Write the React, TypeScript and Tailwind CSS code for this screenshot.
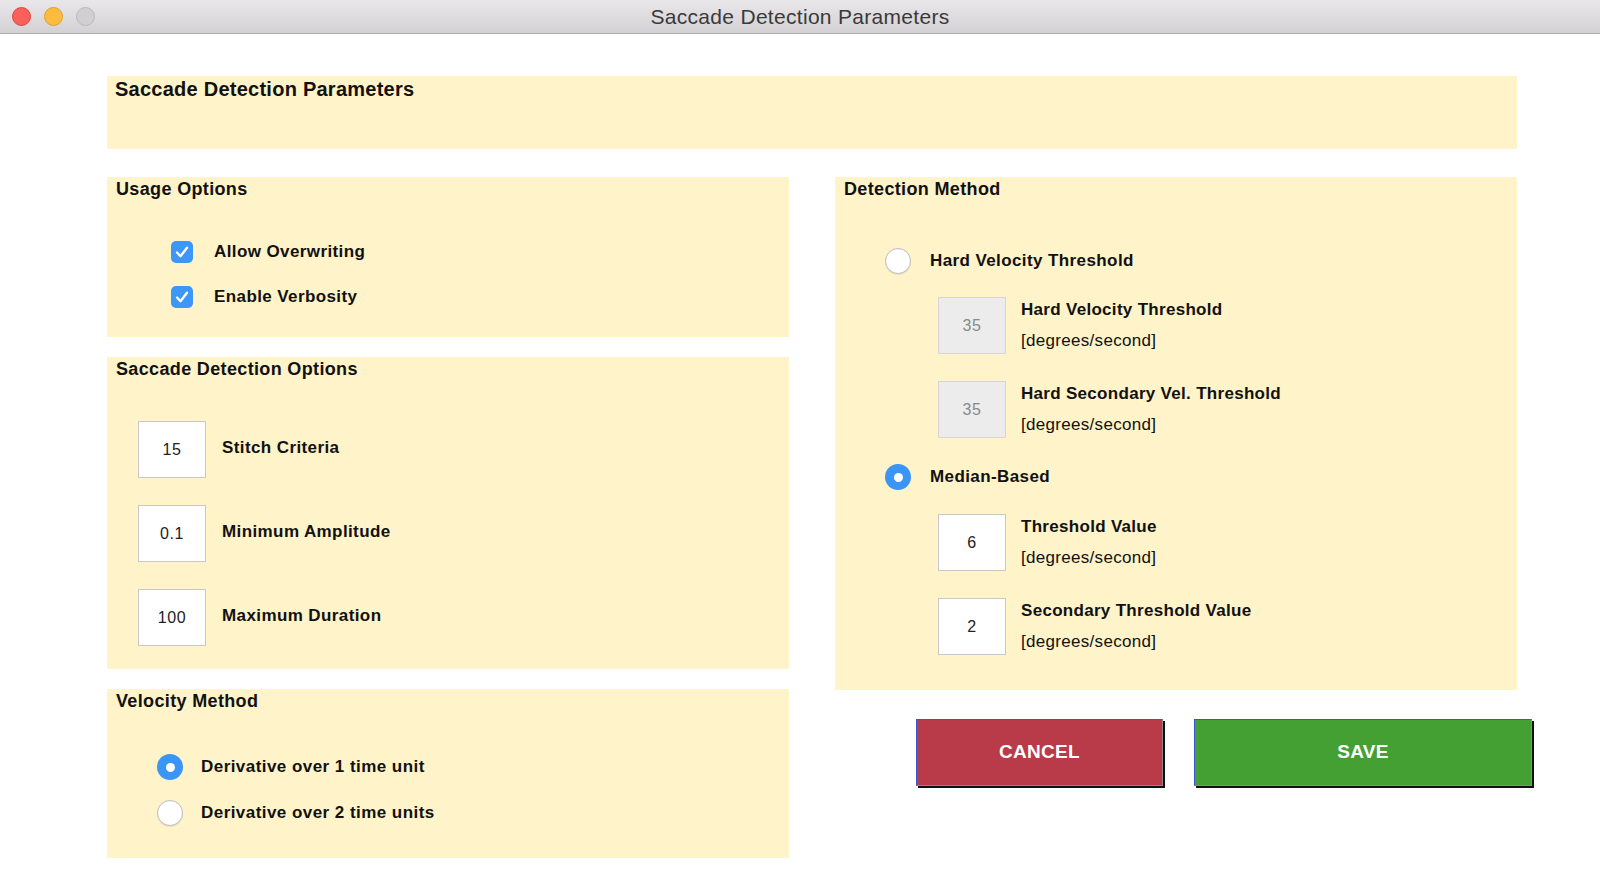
import React from "react";

const panel = "bg-[#fef3c9]";

function Checkbox() {
  return (
    <div className="w-[22px] h-[22px] rounded-[5px] bg-[#3c97f8] flex items-center justify-center">
      <svg width="22" height="22" viewBox="0 0 22 22">
        <path d="M6 11.5 L9.5 15.2 L16 6.8" fill="none" stroke="#fff" strokeWidth="2.4" strokeLinecap="round" strokeLinejoin="round" />
      </svg>
    </div>
  );
}

function Radio({ on }: { on?: boolean }) {
  if (on) {
    return (
      <div className="shrink-0 w-[26px] h-[26px] rounded-full bg-[#3a95f7] flex items-center justify-center">
        <div className="w-[9px] h-[9px] rounded-full bg-white" />
      </div>
    );
  }
  return <div className="shrink-0 w-[26px] h-[26px] rounded-full bg-white border border-[#bdbdbd] shadow-[0_1px_1px_rgba(0,0,0,0.08)]" />;
}

function NumBox({ value, disabled }: { value: string; disabled?: boolean }) {
  return (
    <div
      className={`shrink-0 w-[68px] h-[57px] border flex items-center justify-center text-[16px] tracking-[0.6px] ${
        disabled ? "bg-[#ececec] border-[#d6d6d6] text-[#8a8a8a]" : "bg-white border-[#c8c8c8] text-[#222]"
      }`}
    >
      {value}
    </div>
  );
}

function SectionTitle({ children }: { children: React.ReactNode }) {
  return <div className="pt-px pl-[9px] text-[18px] leading-[22px] tracking-[0.35px] font-bold text-[#111]">{children}</div>;
}

function DetectInput({ value, label, disabled }: { value: string; label: string; disabled?: boolean }) {
  return (
    <div className="flex items-center h-[57px] pl-[103px]">
      <NumBox value={value} disabled={disabled} />
      <div className="ml-[15px] text-[17px] leading-[31px] tracking-[0.3px] text-[#111] -mt-[2px]">
        <div className="font-bold">{label}</div>
        <div>[degrees/second]</div>
      </div>
    </div>
  );
}

const label = "text-[17px] font-bold tracking-[0.4px] text-[#111]";

export default function App() {
  return (
    <div className="w-[1600px] h-[891px] bg-white overflow-hidden font-['Liberation_Sans',Arial,sans-serif]">
      {/* Title bar */}
      <div className="relative h-[34px] bg-gradient-to-b from-[#e9e7e9] to-[#d3d1d3] border-b border-[#ababab] flex items-center justify-center">
        <div className="absolute left-[12px] top-[7px] flex gap-[13px]">
          <div className="w-[19px] h-[19px] rounded-full bg-[#fc605b] border border-[#e0443e]" />
          <div className="w-[19px] h-[19px] rounded-full bg-[#fdbc40] border border-[#dea123]" />
          <div className="w-[19px] h-[19px] rounded-full bg-[#d1d0d1] border border-[#bcbbbc]" />
        </div>
        <span className="text-[21px] tracking-[0.3px] text-[#3a3a3a]">Saccade Detection Parameters</span>
      </div>

      <div className="pl-[107px] pt-[42px]">
        {/* Header */}
        <div className={`${panel} w-[1410px] h-[73px] pl-[8px] pt-px text-[20px] leading-[24px] tracking-[0.25px] font-bold text-[#111]`}>
          Saccade Detection Parameters
        </div>

        <div className="mt-[28px] flex gap-[46px]">
          {/* Left column */}
          <div className="w-[682px] shrink-0 flex flex-col gap-[20px]">
            <div className={`${panel} h-[160px]`}>
              <SectionTitle>Usage Options</SectionTitle>
              <div className="mt-[37px] flex flex-col gap-[15px] pl-[64px]">
                {["Allow Overwriting", "Enable Verbosity"].map((t) => (
                  <div key={t} className="h-[30px] flex items-center">
                    <Checkbox />
                    <span className={`ml-[21px] ${label}`}>{t}</span>
                  </div>
                ))}
              </div>
            </div>

            <div className={`${panel} h-[312px]`}>
              <SectionTitle>Saccade Detection Options</SectionTitle>
              <div className="mt-[41px] flex flex-col gap-[27px] pl-[31px]">
                {[
                  ["15", "Stitch Criteria"],
                  ["0.1", "Minimum Amplitude"],
                  ["100", "Maximum Duration"],
                ].map(([v, t]) => (
                  <div key={t} className="flex items-center">
                    <NumBox value={v} />
                    <span className={`ml-[16px] mb-[4px] ${label}`}>{t}</span>
                  </div>
                ))}
              </div>
            </div>

            <div className={`${panel} h-[169px]`}>
              <SectionTitle>Velocity Method</SectionTitle>
              <div className="mt-[40px] flex flex-col gap-[16px] pl-[50px]">
                <div className="h-[30px] flex items-center">
                  <Radio on />
                  <span className={`ml-[18px] ${label} tracking-[0.45px]`}>Derivative over 1 time unit</span>
                </div>
                <div className="h-[30px] flex items-center">
                  <Radio />
                  <span className={`ml-[18px] ${label} tracking-[0.45px]`}>Derivative over 2 time units</span>
                </div>
              </div>
            </div>
          </div>

          {/* Right column */}
          <div className="w-[682px] shrink-0 flex flex-col">
            <div className={`${panel} h-[513px]`}>
              <SectionTitle>Detection Method</SectionTitle>
              <div className="mt-[46px] h-[30px] flex items-center pl-[50px]">
                <Radio />
                <span className={`ml-[19px] ${label}`}>Hard Velocity Threshold</span>
              </div>
              <div className="mt-[21px]">
                <DetectInput value="35" label="Hard Velocity Threshold" disabled />
              </div>
              <div className="mt-[27px]">
                <DetectInput value="35" label="Hard Secondary Vel. Threshold" disabled />
              </div>
              <div className="mt-[24px] h-[30px] flex items-center pl-[50px]">
                <Radio on />
                <span className={`ml-[19px] ${label}`}>Median-Based</span>
              </div>
              <div className="mt-[22px]">
                <DetectInput value="6" label="Threshold Value" />
              </div>
              <div className="mt-[27px]">
                <DetectInput value="2" label="Secondary Threshold Value" />
              </div>
            </div>

            {/* Buttons */}
            <div className="mt-[29px] pl-[81px] flex gap-[31px]">
              <button className="shrink-0 w-[247px] h-[67px] bg-[#b93a48] border-t border-l border-[#3556d8] border-r-[#8a8a8a] border-b-[#8a8a8a] border-r border-b shadow-[2px_2px_0_#111] text-white text-[19px] tracking-[0.3px] font-bold">
                CANCEL
              </button>
              <button className="shrink-0 w-[338px] h-[67px] bg-[#45a034] border-t border-l border-[#3556d8] border-r-[#8a8a8a] border-b-[#8a8a8a] border-r border-b shadow-[2px_2px_0_#111] text-white text-[19px] tracking-[0.3px] font-bold">
                SAVE
              </button>
            </div>
          </div>
        </div>
      </div>
    </div>
  );
}
